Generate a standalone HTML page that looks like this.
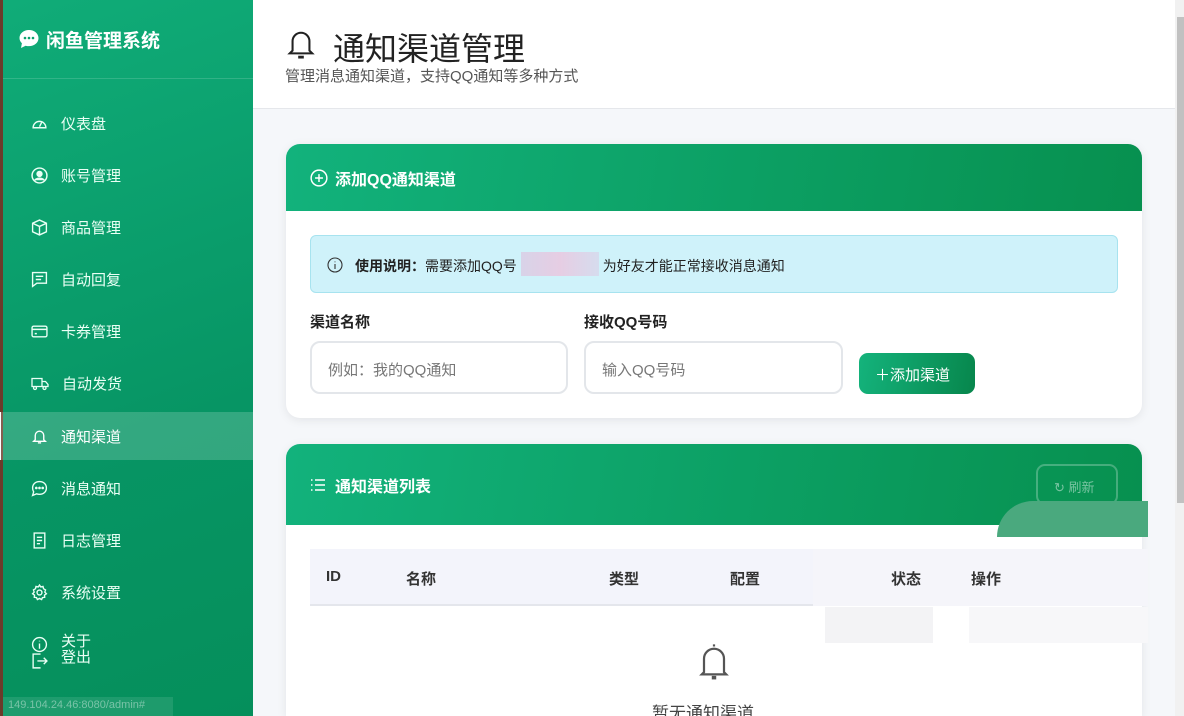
<!DOCTYPE html>
<html style="overflow:hidden;width:1184px;height:716px"><head><meta charset="utf-8"><style>
*{box-sizing:border-box;margin:0;padding:0}
body{width:1184px;height:716px;overflow:hidden;font-family:"Liberation Sans","Noto Sans CJK SC",sans-serif;background:#f5f7fa;position:relative}
.sb{position:absolute;left:0;top:0;width:253px;height:716px;background:linear-gradient(160deg,#10ac78 0%,#079564 60%,#058f5b 100%);color:#e8fff4;border-left:3px solid #6b3b2a}
.logo{height:79px;border-bottom:1px solid rgba(255,255,255,.15);display:flex;align-items:center;padding-left:15px;font-size:19px;font-weight:bold;color:#fff}
.nav{position:absolute;left:-3px;width:256px;height:48px;display:flex;align-items:center;padding-left:34px;font-size:15px;color:#eafff5}
.nav svg{margin-right:13px}
.nav.act{background:rgba(255,255,255,.18);border-left:4px solid #fff;padding-left:30px;color:#fff}
.hdr{position:absolute;left:253px;top:0;width:922px;height:109px;background:#fff;border-bottom:1px solid #e5e7eb}
.card{position:absolute;left:286px;width:856px;background:#fff;border-radius:14px;box-shadow:0 2px 10px rgba(0,0,0,.08);overflow:hidden}
.ch{background:linear-gradient(100deg,#12b27c,#07904f);color:#fff;font-weight:bold;font-size:16px;display:flex;align-items:center;padding-left:24px}
.inp{position:absolute;top:341px;height:53px;border:2px solid #e3e6ea;border-radius:10px;font-size:15px;color:#777;padding:16px 0 0 16px;background:#fff}
.lbl{position:absolute;top:311px;font-size:15px;font-weight:bold;color:#222}
.th{position:absolute;top:568px;font-size:15px;font-weight:bold;color:#333}
</style></head><body>
<div class="sb">
<div class="logo"><svg width="22" height="20" viewBox="0 0 22 20" style="margin-right:6px"><path d="M11 1C5.5 1 1.5 4.6 1.5 9c0 2 .9 3.9 2.4 5.3L3 19l4.6-2.3c1.1.3 2.200.4 3.4.4 5.5 0 9.5-3.6 9.5-8S16.5 1 11 1z" fill="#fff"/><circle cx="7" cy="9" r="1.3" fill="#0aa26d"/><circle cx="11" cy="9" r="1.3" fill="#0aa26d"/><circle cx="15" cy="9" r="1.3" fill="#0aa26d"/></svg>闲鱼管理系统</div>
</div>
<div class="nav" style="top:99px"><svg width="17" height="17" viewBox="0 0 16 16" fill="none" stroke="#eafff5" stroke-width="1.3"><path d="M2 12a6 6 0 1 1 12 0z"/><path d="M8 11l2-4"/></svg>仪表盘</div>
<div class="nav" style="top:151px"><svg width="17" height="17" viewBox="0 0 16 16" fill="none" stroke="#eafff5" stroke-width="1.4"><circle cx="8" cy="8" r="7"/><circle cx="8" cy="6.5" r="2.3" fill="#eafff5"/><path d="M3.5 12.5c2-2.5 7-2.5 9 0" fill="#eafff5"/></svg>账号管理</div>
<div class="nav" style="top:203px"><svg width="17" height="17" viewBox="0 0 16 16" fill="none" stroke="#eafff5" stroke-width="1.3"><path d="M8 1l6.5 3v8L8 15 1.5 12V4z M1.5 4L8 7l6.5-3 M8 7v8"/></svg>商品管理</div>
<div class="nav" style="top:255px"><svg width="17" height="17" viewBox="0 0 16 16" fill="none" stroke="#eafff5" stroke-width="1.3"><path d="M1.5 1.5h13v10h-9l-4 3z M4.5 5h7 M4.5 8h5"/></svg>自动回复</div>
<div class="nav" style="top:307px"><svg width="17" height="17" viewBox="0 0 16 16" fill="none" stroke="#eafff5" stroke-width="1.3"><rect x="1" y="3" width="14" height="10" rx="1.5"/><path d="M1 6h14 M3.5 10h2"/></svg>卡券管理</div>
<div class="nav" style="top:359px"><svg width="18" height="17" viewBox="0 0 18 16" fill="none" stroke="#eafff5" stroke-width="1.3"><path d="M1 3h10v8H1z M11 6h3.5l2.5 3v2h-6"/><circle cx="4" cy="12.5" r="1.5"/><circle cx="13.5" cy="12.5" r="1.5"/></svg>自动发货</div>
<div class="nav act" style="top:412px"><svg width="17" height="17" viewBox="0 0 16 16" fill="none" stroke="#fff" stroke-width="1.3"><path d="M4 11V7a4 4 0 0 1 8 0v4l1.5 1.5h-11z"/><path d="M6.5 14h3"/></svg>通知渠道</div>
<div class="nav" style="top:464px"><svg width="17" height="17" viewBox="0 0 16 16" fill="none" stroke="#eafff5" stroke-width="1.3"><path d="M8 1.5c3.9 0 6.5 2.6 6.5 6s-2.6 6-6.5 6c-1 0-2-.2-2.8-.5L1.5 14.5l1-3.3C1.9 10.2 1.5 9 1.5 7.500c0-3.4 2.6-6 6.5-6z"/><circle cx="5" cy="7.5" r=".6" fill="#eafff5"/><circle cx="8" cy="7.5" r=".6" fill="#eafff5"/><circle cx="11" cy="7.5" r=".6" fill="#eafff5"/></svg>消息通知</div>
<div class="nav" style="top:516px"><svg width="17" height="17" viewBox="0 0 16 16" fill="none" stroke="#eafff5" stroke-width="1.3"><path d="M3 1h10v14H3z M5.5 5h5 M5.5 8h5 M5.5 11h3"/></svg>日志管理</div>
<div class="nav" style="top:568px"><svg width="17" height="17" viewBox="0 0 16 16" fill="none" stroke="#eafff5" stroke-width="1.3"><circle cx="8" cy="8" r="2.3"/><path d="M8 1l1.2 1.8 2.1-.5.5 2.1L13.7 5.6 13 7.6l1.5 1.6-1.8 1.2.2 2.1-2.1.3L10 14.6 8 13.6 6 14.6 5.2 12.8l-2.1-.3.2-2.1L1.5 9.2 3 7.6 2.3 5.6l1.9-1.2.5-2.1 2.1.5z"/></svg>系统设置</div>
<div style="position:absolute;left:31px;top:634px;color:#eafff5;font-size:15px;line-height:16px">
<svg width="17" height="34" viewBox="0 0 16 32" fill="none" stroke="#eafff5" stroke-width="1.3" style="position:absolute;left:0;top:2px"><circle cx="8" cy="8" r="6.5"/><path d="M8 7v5 M8 4.5v.5"/><path d="M9 17H2v13h7 M6 23.5h9 M12 20.5l3 3-3 3"/></svg>
<div style="position:absolute;left:30px;top:0;white-space:nowrap">关于<br>登出</div></div>
<div style="position:absolute;left:3px;top:697px;width:170px;height:19px;background:rgba(255,255,255,.1);color:rgba(255,255,255,.4);font-size:11px;padding:2px 5px">149.104.24.46:8080/admin#</div>

<div class="hdr">
<svg width="30" height="32" viewBox="0 0 16 17" fill="none" stroke="#222" stroke-width="1.1" style="position:absolute;left:33px;top:28px"><path d="M3.5 12V7a4.5 4.5 0 0 1 9 0v5l1.5 1.5H2z"/><path d="M6.5 15.5h3" stroke-width="1.5"/></svg>
<div style="position:absolute;left:80px;top:24px;font-size:32px;color:#222">通知渠道管理</div>
<div style="position:absolute;left:32px;top:65px;font-size:15px;color:#555">管理消息通知渠道，支持QQ通知等多种方式</div>
</div>

<div class="card" style="top:144px;height:274px">
<div class="ch" style="height:67px"><svg width="18" height="18" viewBox="0 0 16 16" fill="none" stroke="#fff" stroke-width="1.3" style="margin-right:7px"><circle cx="8" cy="8" r="7"/><path d="M8 4.5v7M4.5 8h7"/></svg>添加QQ通知渠道</div>
</div>
<div style="position:absolute;left:310px;top:235px;width:808px;height:58px;background:#cff2fa;border:1px solid #a7e3ef;border-radius:6px;font-size:14px;color:#222;padding:20px 0 0 16px;display:flex;align-items:flex-start">
<svg width="16" height="16" viewBox="0 0 16 16" fill="none" stroke="#333" stroke-width="1.1" style="margin-right:12px;margin-top:1px"><circle cx="8" cy="8" r="7"/><path d="M8 7v5M8 4.5v.8"/></svg><b>使用说明：</b>需要添加QQ号 <span style="display:inline-block;width:78px;height:24px;margin:-4px 4px 0 4px;background:linear-gradient(90deg,#d8d3e8,#e6cde3,#d6dcee)"></span>为好友才能正常接收消息通知</div>
<div class="lbl" style="left:310px">渠道名称</div>
<div class="lbl" style="left:584px">接收QQ号码</div>
<div class="inp" style="left:310px;width:258px">例如：我的QQ通知</div>
<div class="inp" style="left:584px;width:259px">输入QQ号码</div>
<div style="position:absolute;left:859px;top:353px;width:116px;height:41px;border-radius:9px;background:linear-gradient(100deg,#14b37c,#07864c);color:#fff;font-size:15px;padding:11px 0 0 16px">＋添加渠道</div>

<div class="card" style="top:444px;height:272px;border-radius:14px 14px 0 0">
<div class="ch" style="height:81px"><svg width="16" height="14" viewBox="0 0 16 14" fill="none" stroke="#fff" stroke-width="1.4" style="margin-right:9px"><path d="M5 2h10M5 7h10M5 12h10M1 2h1.5M1 7h1.5M1 12h1.5"/></svg>通知渠道列表</div>
<div style="position:absolute;left:750px;top:20px;width:82px;height:41px;border:2px solid rgba(255,255,255,.25);border-radius:9px;color:rgba(255,255,255,.45);font-size:13px;padding:11px 0 0 16px">↻ 刷新</div>
</div>
<div style="position:absolute;left:310px;top:549px;width:503px;height:57px;background:#f3f4fb;border-bottom:2px solid #e4e6ec"></div>
<div style="position:absolute;left:813px;top:549px;width:335px;height:57px;background:#f5f5fa"></div>
<div class="th" style="left:326px">ID</div><div class="th" style="left:406px">名称</div><div class="th" style="left:609px">类型</div><div class="th" style="left:730px">配置</div><div class="th" style="left:891px">状态</div><div class="th" style="left:971px">操作</div>
<div style="position:absolute;left:997px;top:501px;width:151px;height:36px;background:#4aa97e;border-radius:40px 0 0 0"></div>
<div style="position:absolute;left:825px;top:607px;width:108px;height:36px;background:#f3f3f5"></div>
<div style="position:absolute;left:969px;top:607px;width:179px;height:36px;background:#f7f7f9"></div>
<svg width="36" height="40" viewBox="0 0 16 18" fill="none" stroke="#555" stroke-width="1" style="position:absolute;left:696px;top:641px"><path d="M8 1.5v1 M3.5 14V8a4.5 4.5 0 0 1 9 0v6l1 1h-11z"/><path d="M7 16.5h2" stroke-width="1.6"/></svg>
<div style="position:absolute;left:652px;top:704px;font-size:17px;color:#444;height:12px;overflow:hidden;line-height:20px">暂无通知渠道</div>
<div style="position:absolute;left:1175px;top:0;width:9px;height:716px;background:#f1f1f1"></div>
<div style="position:absolute;left:1177px;top:17px;width:7px;height:486px;background:#c1c1c1"></div>
</body></html>
